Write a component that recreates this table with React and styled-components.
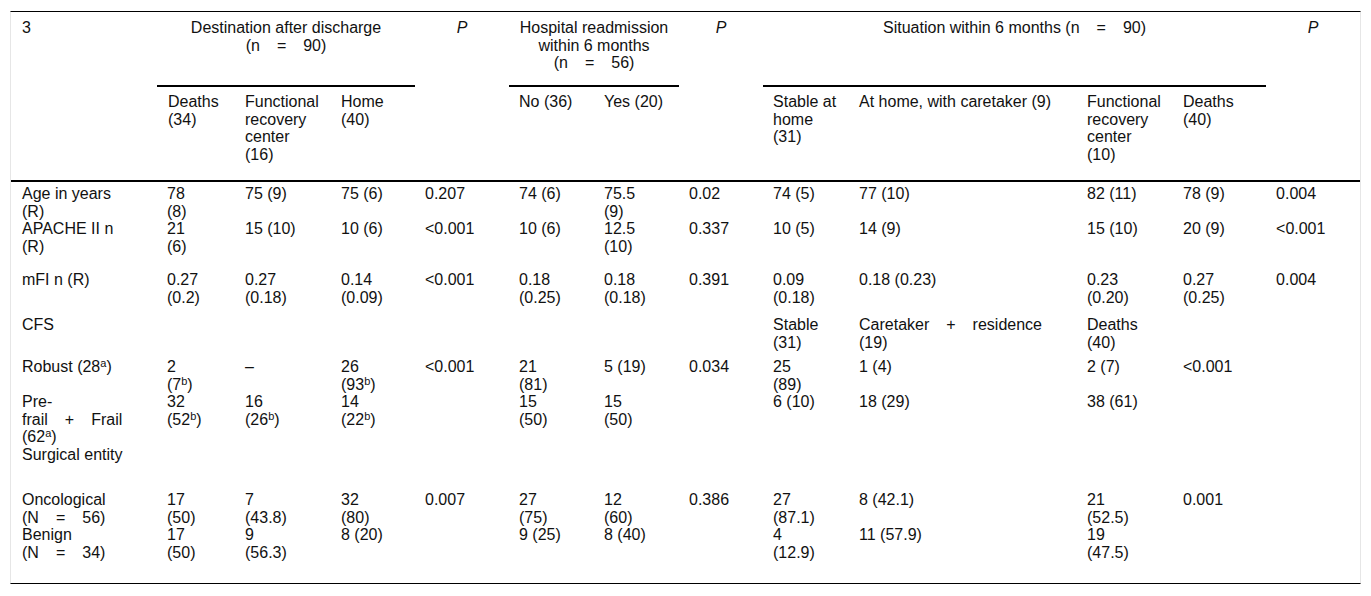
import React from 'react';
import styled, {createGlobalStyle} from 'styled-components';

const GlobalStyle = createGlobalStyle`
    html, body {
        margin: 0;
        padding: 0;
        background: #fff;
    }

    body {
        font-family: "Liberation Sans", Arial, sans-serif;
        color: #111;
    }
`;

const Page = styled.div`
    padding: 11px 0 0 10px;
`;

const Table = styled.table`
    width: 1351px;
    table-layout: fixed;
    border-collapse: separate;
    border-spacing: 0;
    border-top: 1px solid #000;
    border-bottom: 1px solid #000;
    border-left: 1px solid #e6e6e6;
    border-right: 1px solid #e6e6e6;
    font-size: 16px;
    line-height: 17.5px;
`;

const HeadCell = styled.th`
    font-weight: 400;
    font-style: ${props => (props.$italic ? 'italic' : 'normal')};
    text-align: ${props => props.$align || 'left'};
    vertical-align: top;
    white-space: nowrap;
    padding: ${props => (props.$sub ? '6px 10px 17px' : '7px 10px 13.5px')};
    border-bottom: ${props => (props.$rule || props.$base ? '2px solid #000' : 'none')};

    &:first-child {
        padding-left: 11px;
    }
`;

const BodyCell = styled.td`
    text-align: left;
    vertical-align: top;
    white-space: nowrap;
    padding: ${props => props.$top}px 10px ${props => props.$gap}px;

    &:first-child {
        padding-left: 11px;
    }
`;

const Sup = styled.sup`
    font-size: 11px;
    line-height: 0;
    vertical-align: 5px;
`;

// the wide "=" and "+" of the source: plain spaces would be too narrow
const Wide = styled.span`
    margin: 0 17px;
`;

const columnWidths = [146, 78, 96, 84, 94, 85, 85, 84, 86, 228, 96, 93, 94];

const subHeads = [
    ['Deaths', '(34)'],
    ['Functional', 'recovery', 'center', '(16)'],
    ['Home', '(40)'],
    ['No (36)'],
    ['Yes (20)'],
    ['Stable at', 'home', '(31)'],
    ['At home, with caretaker (9)'],
    ['Functional', 'recovery', 'center', '(10)'],
    ['Deaths', '(40)'],
];

// space left under each body row, as it falls in the source
const rowGaps = [0, 16, 10, 7, 0, 0, 28, 0, 21.5];

const rows = [
    [['Age in years', '(R)'], '78\n(8)', '75 (9)', '75 (6)', '0.207', '74 (6)', '75.5\n(9)', '0.02', '74 (5)', '77 (10)', '82 (11)', '78 (9)', '0.004'],
    [['APACHE II n', '(R)'], '21\n(6)', '15 (10)', '10 (6)', '<0.001', '10 (6)', '12.5\n(10)', '0.337', '10 (5)', '14 (9)', '15 (10)', '20 (9)', '<0.001'],
    ['mFI n (R)', '0.27\n(0.2)', '0.27\n(0.18)', '0.14\n(0.09)', '<0.001', '0.18\n(0.25)', '0.18\n(0.18)', '0.391', '0.09\n(0.18)', '0.18 (0.23)', '0.23\n(0.20)', '0.27\n(0.25)', '0.004'],
    ['CFS', '', '', '', '', '', '', '', 'Stable\n(31)', [<>Caretaker<Wide>+</Wide>residence</>, '(19)'], 'Deaths\n(40)', '', ''],
    [
        [<>Robust (28<Sup>a</Sup>)</>],
        ['2', <>(7<Sup>b</Sup>)</>],
        '–',
        ['26', <>(93<Sup>b</Sup>)</>],
        '<0.001', '21\n(81)', '5 (19)', '0.034', '25\n(89)', '1 (4)', '2 (7)', '<0.001', '',
    ],
    [
        ['Pre-', <>frail<Wide>+</Wide>Frail</>, <>(62<Sup>a</Sup>)</>],
        ['32', <>(52<Sup>b</Sup>)</>],
        ['16', <>(26<Sup>b</Sup>)</>],
        ['14', <>(22<Sup>b</Sup>)</>],
        '', '15\n(50)', '15\n(50)', '', '6 (10)', '18 (29)', '38 (61)', '', '',
    ],
    ['Surgical entity', '', '', '', '', '', '', '', '', '', '', '', ''],
    [['Oncological', <>(N<Wide>=</Wide>56)</>], '17\n(50)', '7\n(43.8)', '32\n(80)', '0.007', '27\n(75)', '12\n(60)', '0.386', '27\n(87.1)', '8 (42.1)', '21\n(52.5)', '0.001', ''],
    [['Benign', <>(N<Wide>=</Wide>34)</>], '17\n(50)', '9\n(56.3)', '8 (20)', '', '9 (25)', '8 (40)', '', '4\n(12.9)', '11 (57.9)', '19\n(47.5)', '', ''],
];

const Lines = ({value}) => {
    const list = typeof value === 'string' ? value.split('\n') : value;
    return list.map((line, i) => (
        <React.Fragment key={i}>
            {i > 0 && <br/>}
            {line}
        </React.Fragment>
    ));
};

const App = () => (
    <Page>
        <GlobalStyle/>
        <Table>
            <colgroup>
                {columnWidths.map((w, i) => <col key={i} style={{width: w}}/>)}
            </colgroup>
            <thead>
                <tr>
                    <HeadCell rowSpan={2} $base>3</HeadCell>
                    <HeadCell colSpan={3} $align="center" $rule>
                        Destination after discharge<br/>
                        (n<Wide>=</Wide>90)
                    </HeadCell>
                    <HeadCell rowSpan={2} $align="center" $italic $base>P</HeadCell>
                    <HeadCell colSpan={2} $align="center" $rule>
                        Hospital readmission<br/>
                        within 6 months<br/>
                        (n<Wide>=</Wide>56)
                    </HeadCell>
                    <HeadCell rowSpan={2} $align="center" $italic $base>P</HeadCell>
                    <HeadCell colSpan={4} $align="center" $rule>
                        Situation within 6 months (n<Wide>=</Wide>90)
                    </HeadCell>
                    <HeadCell rowSpan={2} $align="center" $italic $base>P</HeadCell>
                </tr>
                <tr>
                    {subHeads.map((head, i) => (
                        <HeadCell key={i} $sub $base>
                            <Lines value={head}/>
                        </HeadCell>
                    ))}
                </tr>
            </thead>
            <tbody>
                {rows.map((row, r) => (
                    <tr key={r}>
                        {row.map((cell, c) => (
                            <BodyCell key={c} $top={r === 0 ? 3.25 : 0} $gap={rowGaps[r]}>
                                <Lines value={cell}/>
                            </BodyCell>
                        ))}
                    </tr>
                ))}
            </tbody>
        </Table>
    </Page>
);

export default App;
